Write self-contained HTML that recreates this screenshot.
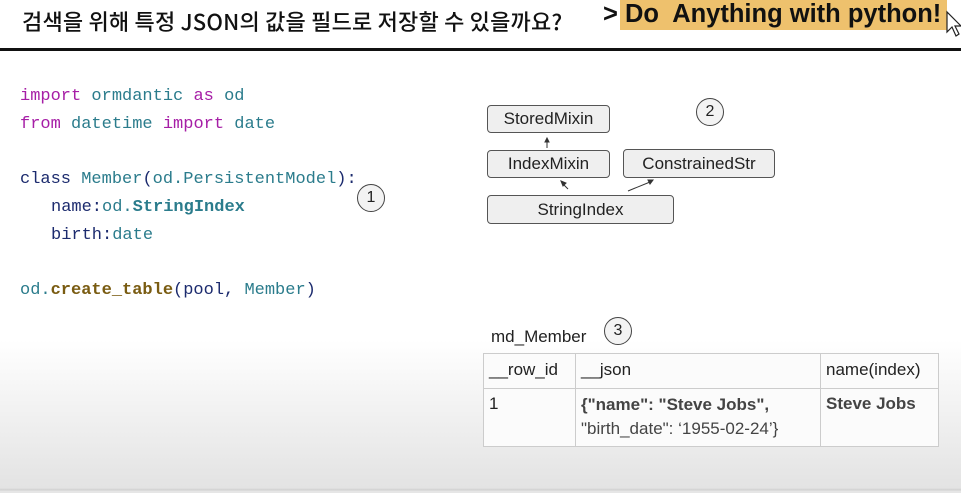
<!DOCTYPE html>
<html><head><meta charset="utf-8"><style>
*{margin:0;padding:0;box-sizing:border-box}
body{width:961px;height:493px;overflow:hidden;position:relative;font-family:"Liberation Sans","Noto Sans CJK KR",sans-serif;background:linear-gradient(to bottom,#fff 0,#fff 340px,#e3e3e3 488px,#d0d0d0 490px,#e6e6e6 491px);}
.abs{position:absolute;white-space:nowrap}
.title{left:22px;top:5px;font-size:22px;color:#111;font-family:"Noto Sans CJK KR",sans-serif;font-weight:500;letter-spacing:0.2px}
.hl{left:620px;top:0;width:327px;height:30px;background:#eec16d}
.hlt{left:603px;top:0px;font-size:25.5px;line-height:28px;font-weight:bold;color:#111;letter-spacing:0px}
.line{left:0;top:48px;width:961px;height:3px;background:#111}
.code{font-family:"Liberation Mono",monospace;font-size:17px;left:20px}
.k{color:#a61ea6}.t{color:#2b7c8c}.n{color:#1c2b6e}.b{color:#7a5c12;font-weight:bold}.tb{color:#2b7c8c;font-weight:bold}
.circ{width:28px;height:28px;border:1px solid #444;border-radius:50%;background:#f3f3f3;font-size:16px;text-align:center;line-height:26px;color:#222}
.box{border:1px solid #555;border-radius:4px;background:#efefef;font-size:17px;text-align:center;color:#222}
table{border-collapse:collapse;position:absolute;left:483px;top:353px;font-size:17px;color:#222}
td{border:1px solid #ccc;vertical-align:top;padding:5px 5px;background:#fbfbfb}
</style></head><body>
<div class="abs title">검색을 위해 특정 JSON의 값을 필드로 저장할 수 있을까요?</div>
<div class="abs hl"></div>
<div class="abs hlt">&gt; Do&nbsp; Anything with python!</div>
<svg class="abs" style="left:945px;top:10px" width="18" height="28"><path d="M2 2 L2 22 L7 17 L11 26 L14 24 L10 16 L16 16 Z" fill="#fff" stroke="#222" stroke-width="1.2"/></svg>
<div class="abs line"></div>

<div class="abs code" style="top:87px"><span class="k">import</span> <span class="t">ormdantic</span> <span class="k">as</span> <span class="t">od</span></div>
<div class="abs code" style="top:115px"><span class="k">from</span> <span class="t">datetime</span> <span class="k">import</span> <span class="t">date</span></div>
<div class="abs code" style="top:170px"><span class="n">class</span> <span class="t">Member</span><span class="n">(</span><span class="t">od.PersistentModel</span><span class="n">):</span></div>
<div class="abs code" style="top:198px;left:51px"><span class="n">name:</span><span class="t">od.</span><span class="tb">StringIndex</span></div>
<div class="abs code" style="top:226px;left:51px"><span class="n">birth:</span><span class="t">date</span></div>
<div class="abs code" style="top:281px"><span class="t">od.</span><span class="b">create_table</span><span class="n">(pool, </span><span class="t">Member</span><span class="n">)</span></div>
<div class="abs circ" style="left:357px;top:184px">1</div>

<div class="abs box" style="left:487px;top:105px;width:123px;height:28px;line-height:26px">StoredMixin</div>
<div class="abs box" style="left:487px;top:150px;width:123px;height:28px;line-height:26px">IndexMixin</div>
<div class="abs box" style="left:623px;top:149px;width:152px;height:29px;line-height:27px">ConstrainedStr</div>
<div class="abs box" style="left:487px;top:195px;width:187px;height:29px;line-height:28px">StringIndex</div>
<div class="abs circ" style="left:696px;top:98px">2</div>
<svg class="abs" style="left:540px;top:135px" width="130" height="60"><g stroke="#333" stroke-width="1" fill="#333"><line x1="7" y1="13" x2="7" y2="6"/><path d="M5 7 L7 3 L9 7Z"/><line x1="28" y1="54" x2="23" y2="49"/><path d="M21 46 L26 48 L23 51Z"/><line x1="88" y1="56" x2="110" y2="47"/><path d="M113 45 L108 45 L110 49Z"/></g></svg>

<div class="abs" style="left:491px;top:327px;font-size:17px;color:#222">md_Member</div>
<div class="abs circ" style="left:604px;top:317px">3</div>
<table>
<tr style="height:35px"><td style="width:92px;padding-top:6px">__row_id</td><td style="width:245px;padding-top:6px">__json</td><td style="width:118px;padding-top:6px">name(index)</td></tr>
<tr style="height:55px"><td>1</td><td style="line-height:24px;padding-top:4px"><b style="color:#444">{"name": "Steve Jobs",</b><br><span style="color:#444">"birth_date": ‘1955-02-24’}</span></td><td><b style="color:#444">Steve Jobs</b></td></tr>
</table>
</body></html>
